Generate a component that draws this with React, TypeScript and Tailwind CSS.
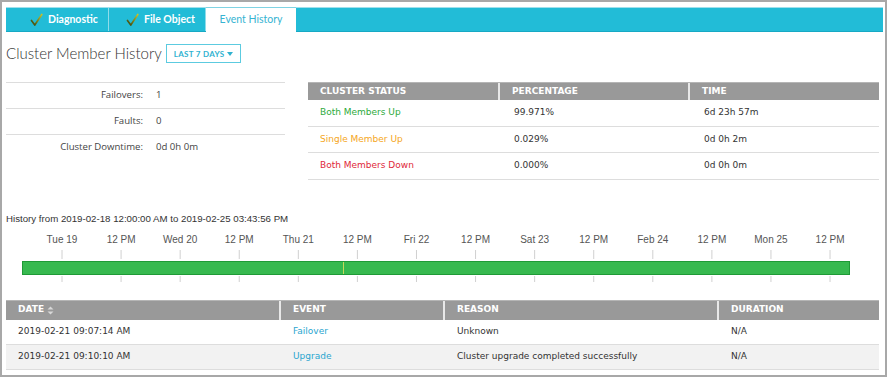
import React from "react";

const ticks = [
  "Tue 19", "12 PM", "Wed 20", "12 PM", "Thu 21", "12 PM", "Fri 22",
  "12 PM", "Sat 23", "12 PM", "Feb 24", "12 PM", "Mon 25", "12 PM",
];

const statusRows = [
  { label: "Both Members Up", color: "text-[#2eaa3c]", pct: "99.971%", time: "6d 23h 57m" },
  { label: "Single Member Up", color: "text-[#f5a623]", pct: "0.029%", time: "0d 0h 2m" },
  { label: "Both Members Down", color: "text-[#e0283a]", pct: "0.000%", time: "0d 0h 0m" },
];

const events = [
  { date: "2019-02-21 09:07:14 AM", event: "Failover", reason: "Unknown", dur: "N/A" },
  { date: "2019-02-21 09:10:10 AM", event: "Upgrade", reason: "Cluster upgrade completed successfully", dur: "N/A" },
];

function Check() {
  return (
    <svg width="13" height="14" viewBox="0 0 13 14" className="shrink-0">
      <defs>
        <linearGradient id="ck" x1="0" y1="1" x2="1" y2="0">
          <stop offset="0" stopColor="#33420f" />
          <stop offset="1" stopColor="#c9c22a" />
        </linearGradient>
      </defs>
      <path d="M1.5 7.5 L4.8 12 L11.8 1.5" fill="none" stroke="url(#ck)" strokeWidth="1.7" strokeLinecap="round" strokeLinejoin="round" />
    </svg>
  );
}

function Timeline() {
  const x0 = 62;
  const step = 59.08;
  return (
    <svg width="887" height="58" className="block -ml-[6px]">
      {ticks.map((t, i) => {
        const x = x0 + i * step;
        return (
          <g key={i}>
            <text x={x} y="18" textAnchor="middle" fontFamily="'Liberation Sans', Arial, sans-serif" fontSize="10" fill="#555">
              {t}
            </text>
            <line x1={x} y1="25" x2={x} y2="34" stroke="#d0d0d0" strokeWidth="1" />
            <line x1={x} y1="51" x2={x} y2="57" stroke="#d0d0d0" strokeWidth="1" />
          </g>
        );
      })}
      <rect x="22.5" y="36.5" width="827" height="13" fill="#37b94f" stroke="#1f9a36" strokeWidth="1" />
      <line x1="343.5" y1="37" x2="343.5" y2="49" stroke="#c8d85a" strokeWidth="1" />
    </svg>
  );
}

export default function App() {
  return (
    <div className="w-[887px] h-[377px] border-2 border-[#a8a8a8] bg-white overflow-hidden pl-[4px] pr-[2px] pt-[5px] font-['Lato',sans-serif]">
      {/* tabs */}
      <div className="flex h-[25px] bg-[#22bcd7] border-t border-[#9fe0ec] border-b border-b-[#17a9c4]">
        <div className="w-[103px] flex items-center pl-[24px] gap-[5px] border-r border-[#8fdcea] text-white text-[10.5px] font-bold">
          <Check />
          <span>Diagnostic</span>
        </div>
        <div className="w-[97px] flex items-center pl-[17px] gap-[5px] border-r border-[#8fdcea] text-white text-[10.5px] font-bold">
          <Check />
          <span>File Object</span>
        </div>
        <div className="w-[90px] -mt-px -mb-px flex items-center justify-center bg-white border-t border-[#7fd3e3] text-[#36b4d2] text-[10.5px]">
          Event History
        </div>
      </div>

      {/* heading */}
      <div className="flex items-center gap-[4px] mt-[12px] h-[19px]">
        <h1 className="text-[15px] text-[#333] font-light leading-none">Cluster Member History</h1>
        <button className="h-[19px] px-[7px] border border-[#5ccbe0] text-[#2fb2d0] text-[8px] font-bold tracking-[0.3px] flex items-center gap-[3px]">
          LAST 7 DAYS
          <svg width="6" height="4" viewBox="0 0 6 4"><path d="M0 0 H6 L3 4 Z" fill="#2fb2d0" /></svg>
        </button>
      </div>

      {/* stats */}
      <div className="flex mt-[19px] pr-[4px]">
        <div className="w-[279px] font-['Open_Sans',sans-serif] text-[9.6px] text-[#444]">
          {[
            ["Failovers:", "1"],
            ["Faults:", "0"],
            ["Cluster Downtime:", "0d 0h 0m"],
          ].map(([k, v]) => (
            <div key={k} className="flex items-center h-[26px] border-t border-[#ddd]">
              <span className="w-[137px] text-right">{k}</span>
              <span className="ml-[13px]">{v}</span>
            </div>
          ))}
        </div>
        <div className="ml-[23px] flex-1 font-['DejaVu_Sans',sans-serif] text-[9px]">
          <div className="grid grid-cols-[192px_190px_1fr] h-[18px] bg-[#999] border-t border-[#b5b5b5] text-white font-bold">
            <div className="flex items-center pl-[12px] border-r-2 border-[#e8e8e8]">CLUSTER STATUS</div>
            <div className="flex items-center pl-[12px] border-r-2 border-[#e8e8e8]">PERCENTAGE</div>
            <div className="flex items-center pl-[12px]">TIME</div>
          </div>
          {statusRows.map((r) => (
            <div key={r.label} className="grid grid-cols-[192px_190px_1fr] h-[26.5px] border-b border-[#ddd] text-[#333]">
              <div className={"flex items-center pl-[12px] " + r.color}>{r.label}</div>
              <div className="flex items-center pl-[14px]">{r.pct}</div>
              <div className="flex items-center pl-[14px]">{r.time}</div>
            </div>
          ))}
        </div>
      </div>

      {/* history */}
      <div className="mt-[33px] font-['Liberation_Sans',Arial,sans-serif] text-[9.7px] text-[#333] leading-[12px]">
        History from 2019-02-18 12:00:00 AM to 2019-02-25 03:43:56 PM
      </div>
      <Timeline />

      {/* events */}
      <div className="mt-[17px] mr-[4px] font-['DejaVu_Sans',sans-serif] text-[9px]">
        <div className="grid grid-cols-[275px_164px_274px_1fr] h-[20px] bg-[#999] border-t border-[#b5b5b5] text-white font-bold">
          <div className="flex items-center pl-[12px] gap-[3px] border-r-2 border-[#e8e8e8]">
            DATE
            <svg width="7" height="9" viewBox="0 0 7 9">
              <path d="M0.5 3.5 L3.5 0.5 L6.5 3.5 Z" fill="#d8d8d8" />
              <path d="M0.5 5.5 L3.5 8.5 L6.5 5.5 Z" fill="#d8d8d8" />
            </svg>
          </div>
          <div className="flex items-center pl-[12px] border-r-2 border-[#e8e8e8]">EVENT</div>
          <div className="flex items-center pl-[12px] border-r-2 border-[#e8e8e8]">REASON</div>
          <div className="flex items-center pl-[12px]">DURATION</div>
        </div>
        {events.map((e, i) => (
          <div
            key={e.date}
            className={"grid grid-cols-[275px_164px_274px_1fr] h-[25px] border-b border-[#ddd] text-[#333] " + (i === 1 ? "bg-[#f2f2f2]" : "bg-white")}
          >
            <div className="flex items-center pl-[12px]">{e.date}</div>
            <div className="flex items-center pl-[12px] text-[#2aa6d0]">{e.event}</div>
            <div className="flex items-center pl-[12px]">{e.reason}</div>
            <div className="flex items-center pl-[12px]">{e.dur}</div>
          </div>
        ))}
      </div>
    </div>
  );
}
